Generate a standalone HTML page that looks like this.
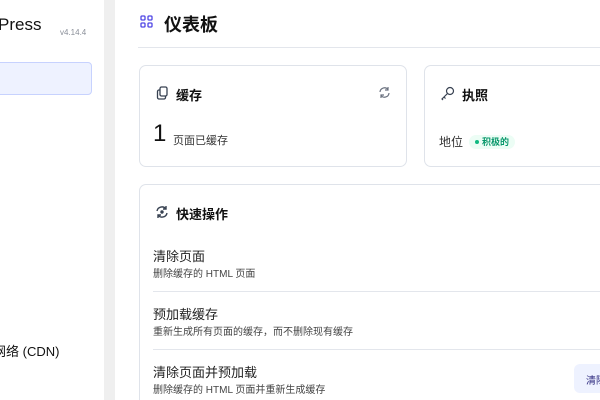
<!DOCTYPE html>
<html style="overflow:hidden;height:400px"><head><meta charset="utf-8"><style>
*{margin:0;padding:0;box-sizing:border-box}
body{width:600px;height:400px;overflow:hidden;background:#fff;font-family:"Liberation Sans","Noto Sans CJK SC",sans-serif;position:relative;color:#111}
.abs{position:absolute;white-space:nowrap}
.card{position:absolute;border:1px solid #dfe3ea;border-radius:7px;background:#fff}
.t{font-size:13px;color:#222}
.s{font-size:10px;color:#444}
</style></head><body>
<div class="abs" style="left:104px;top:0;width:11px;height:400px;background:#efefef"></div>
<div class="abs" style="left:-2px;top:15px;font-size:17px;color:#111">Press</div>
<div class="abs" style="left:60px;top:28px;font-size:8px;color:#8a8f99">v4.14.4</div>
<div class="abs" style="left:-6px;top:62px;width:98px;height:33px;background:#eef2ff;border:1px solid #c7d2fe;border-radius:4px"></div>
<div class="abs" style="left:-7px;top:341px;font-size:13px;color:#111">网络 (CDN)</div>

<svg class="abs" style="left:140px;top:15px" width="13" height="13" viewBox="0 0 13 13" fill="none" stroke="#4f46e5" stroke-width="1.3"><rect x="1" y="1" width="4" height="4" rx="1"/><rect x="8" y="1" width="4" height="4" rx="1"/><rect x="1" y="8" width="4" height="4" rx="1"/><rect x="8" y="8" width="4" height="4" rx="1"/></svg>
<div class="abs" style="left:164px;top:11px;font-size:18px;font-weight:bold;color:#111">仪表板</div>
<div class="abs" style="left:138px;top:47px;width:462px;height:1px;background:#e3e6ec"></div>

<div class="card" style="left:139px;top:65px;width:268px;height:102px"></div>
<svg class="abs" style="left:156px;top:86px" width="13" height="14" viewBox="0 0 13 14" fill="none" stroke="#374151" stroke-width="1.3"><rect x="4" y="1" width="7" height="9" rx="1.5"/><path d="M4 4H3a1.5 1.5 0 0 0-1.5 1.5v6A1.5 1.5 0 0 0 3 13h5a1.5 1.5 0 0 0 1.5-1.5V10"/></svg>
<div class="abs" style="left:176px;top:85px;font-size:13px;font-weight:bold">缓存</div>
<svg class="abs" style="left:378px;top:86px" width="13" height="13" viewBox="0 0 13 13" fill="none" stroke="#6b7280" stroke-width="1.2"><path d="M2 6a4.5 4.5 0 0 1 8-2.5M11 7a4.5 4.5 0 0 1-8 2.5"/><path d="M10 1v3H7M3 12V9h3"/></svg>
<div class="abs" style="left:153px;top:120px;font-size:24px;color:#111">1</div>
<div class="abs" style="left:173px;top:132px;font-size:11px;color:#333">页面已缓存</div>

<div class="card" style="left:424px;top:65px;width:176px;height:102px;border-right:none;border-radius:7px 0 0 7px"></div>
<svg class="abs" style="left:440px;top:86px" width="15" height="15" viewBox="0 0 15 15" fill="none" stroke="#374151" stroke-width="1.2"><circle cx="10" cy="5" r="3.5"/><path d="M7.5 7.5L2 13l1 1M4 11l1.5 1.5"/></svg>
<div class="abs" style="left:462px;top:85px;font-size:13px;font-weight:bold">执照</div>
<div class="abs" style="left:439px;top:133px;font-size:12px;color:#333">地位</div>
<div class="abs" style="left:469px;top:135px;width:46px;height:14px;border-radius:7px;background:#ecfdf5"></div>
<div class="abs" style="left:475px;top:140px;width:4px;height:4px;border-radius:2px;background:#10b981"></div>
<div class="abs" style="left:482px;top:135px;font-size:9px;font-weight:bold;color:#059669">积极的</div>

<div class="card" style="left:139px;top:184px;width:461px;height:216px;border-right:none;border-bottom:none;border-radius:7px 0 0 0"></div>
<svg class="abs" style="left:155px;top:205px" width="14" height="14" viewBox="0 0 14 14" fill="none" stroke="#374151" stroke-width="1.4"><path d="M2 6a5 5 0 0 1 9-2M12 8a5 5 0 0 1-9 2"/><path d="M11 1v3H8M3 13v-3h3"/><circle cx="7" cy="7" r="1" fill="#374151"/></svg>
<div class="abs" style="left:176px;top:204px;font-size:13px;font-weight:bold">快速操作</div>
<div class="abs t" style="left:153px;top:246px">清除页面</div>
<div class="abs s" style="left:153px;top:265px">删除缓存的 HTML 页面</div>
<div class="abs" style="left:153px;top:291px;width:447px;height:1px;background:#e3e6ec"></div>
<div class="abs t" style="left:153px;top:304px">预加载缓存</div>
<div class="abs s" style="left:153px;top:323px">重新生成所有页面的缓存，而不删除现有缓存</div>
<div class="abs" style="left:153px;top:349px;width:447px;height:1px;background:#e3e6ec"></div>
<div class="abs t" style="left:153px;top:362px">清除页面并预加载</div>
<div class="abs s" style="left:153px;top:381px">删除缓存的 HTML 页面并重新生成缓存</div>
<div class="abs" style="left:574px;top:364px;width:26px;height:29px;border-radius:6px 0 0 6px;background:#eef2ff;overflow:hidden"><span style="position:absolute;left:12px;top:8px;font-size:10px;color:#312e81">清除</span></div>
</body></html>
